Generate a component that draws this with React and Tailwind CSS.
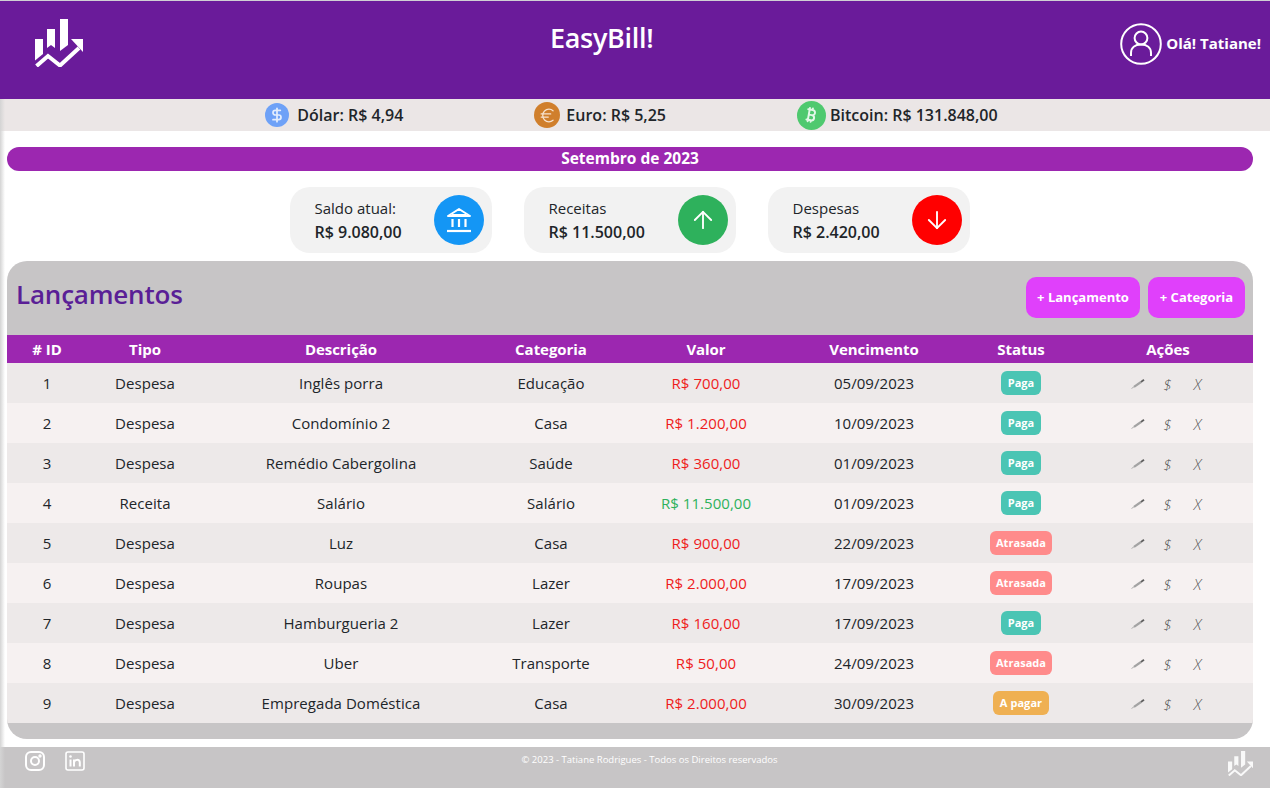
import React from "react";
import { ArrowUp, ArrowDown, DollarSign, Euro, Bitcoin } from "lucide-react";

function Logo({ className }) {
  return (
    <svg viewBox="0 0 48 48" className={className} fill="currentColor">
      <polygon points="0,20 8,20 8,35 0,41.5" />
      <polygon points="12,10 20,10 20,29 16,26 12,29" />
      <polygon points="25,0 33,0 33,26 25,32" />
      <polyline points="1.5,47 13,37 25,46.5 44,29" fill="none" stroke="currentColor" strokeWidth="4" />
      <polygon points="36,20 48,20 48,33" />
    </svg>
  );
}

function UserIcon() {
  return (
    <svg viewBox="0 0 42 42" className="w-[42px] h-[42px]" fill="none" stroke="white" strokeWidth="2">
      <circle cx="21" cy="21" r="19.8" />
      <circle cx="21" cy="15" r="6.4" />
      <path d="M11 33 V30 C11 24.5 15 21.5 21 21.5 C27 21.5 31 24.5 31 30 V33" />
    </svg>
  );
}

function BankIcon() {
  return (
    <svg viewBox="0 0 28 28" className="w-7 h-7" fill="none" stroke="white">
      <path d="M14 3 L25 10 H3 Z" strokeWidth="2" strokeLinejoin="round" />
      <path d="M7 9 H21" strokeWidth="2" />
      <path d="M2 25 H26" strokeWidth="2.2" />
      <path d="M7.5 13 V21 M14 13 V21 M20.5 13 V21" strokeWidth="2.2" />
    </svg>
  );
}

function Pen() {
  return (
    <svg viewBox="0 0 14 10" className="w-3.5 h-2.5" fill="none">
      <path d="M0.5 9.5 L3 7.8" stroke="#b0b0b0" strokeWidth="1" />
      <path d="M3 7.8 L10 3" stroke="#a3a3a3" strokeWidth="2.2" />
      <path d="M10 3 L13 0.8" stroke="#606060" strokeWidth="1.8" />
    </svg>
  );
}

function Instagram() {
  return (
    <svg viewBox="0 0 20 20" className="w-5 h-5" fill="none" stroke="white" strokeWidth="2">
      <rect x="1" y="1" width="18" height="18" rx="5" />
      <circle cx="10" cy="10" r="4" />
      <circle cx="15" cy="5" r="0.7" fill="white" />
    </svg>
  );
}

function Linkedin() {
  return (
    <svg viewBox="0 0 20 20" className="w-5 h-5" fill="none">
      <rect x="1" y="1" width="18" height="18" rx="2" stroke="white" strokeWidth="1.6" />
      <path d="M5.5 8.5 V15.5 M9 15.5 V8.5 M9 11.5 C9.5 8.5 14.8 7.5 14.8 11.5 V15.5" stroke="white" strokeWidth="2" />
      <circle cx="5.5" cy="5.5" r="1.3" fill="white" />
    </svg>
  );
}

const rows = [
  [1, "Despesa", "Inglês porra", "Educação", "R$ 700,00", "05/09/2023", "Paga"],
  [2, "Despesa", "Condomínio 2", "Casa", "R$ 1.200,00", "10/09/2023", "Paga"],
  [3, "Despesa", "Remédio Cabergolina", "Saúde", "R$ 360,00", "01/09/2023", "Paga"],
  [4, "Receita", "Salário", "Salário", "R$ 11.500,00", "01/09/2023", "Paga"],
  [5, "Despesa", "Luz", "Casa", "R$ 900,00", "22/09/2023", "Atrasada"],
  [6, "Despesa", "Roupas", "Lazer", "R$ 2.000,00", "17/09/2023", "Atrasada"],
  [7, "Despesa", "Hamburgueria 2", "Lazer", "R$ 160,00", "17/09/2023", "Paga"],
  [8, "Despesa", "Uber", "Transporte", "R$ 50,00", "24/09/2023", "Atrasada"],
  [9, "Despesa", "Empregada Doméstica", "Casa", "R$ 2.000,00", "30/09/2023", "A pagar"],
];

const badge = {
  Paga: "bg-[#4bc5b4] w-10",
  Atrasada: "bg-[#ff8b8b] w-[62px]",
  "A pagar": "bg-[#efb052] w-14",
};

const heads = ["# ID", "Tipo", "Descrição", "Categoria", "Valor", "Vencimento", "Status", "Ações"];

export default function App() {
  return (
    <div className="relative w-[1270px] h-[788px] overflow-hidden bg-white flex flex-col font-['Open_Sans','Noto_Sans',sans-serif] text-[#212529]">
      <header className="h-[99px] shrink-0 border-t border-[#cfcfd4] bg-[#6a1b9a] flex justify-between items-start pl-[35px] pr-[9px] text-white">
        <Logo className="w-12 h-12 mt-[18px] text-white" />
        <h1 className="text-[27px] font-semibold leading-none mt-[23px] tracking-[-0.3px]">EasyBill!</h1>
        <div className="flex items-center gap-1 mt-[22px]">
          <UserIcon />
          <span className="text-[15px] font-bold mb-[1px]">Olá! Tatiane!</span>
        </div>
      </header>

      <div className="h-8 shrink-0 bg-[#ebe6e6] flex items-center justify-center gap-[131px] pr-[7px] text-[16px] font-semibold text-[#212529]">
        <div className="flex items-center gap-2">
          <span className="w-6 h-6 rounded-full bg-[#6ea1f7] flex items-center justify-center">
            <DollarSign size={16} color="#e3edfd" strokeWidth={2.6} />
          </span>
          Dólar: R$ 4,94
        </div>
        <div className="flex items-center gap-[6px]">
          <span className="w-[26px] h-[26px] rounded-full bg-[#d07f2c] flex items-center justify-center">
            <Euro size={19} color="#f7e3cf" strokeWidth={1.6} />
          </span>
          Euro: R$ 5,25
        </div>
        <div className="flex items-center gap-[4px]">
          <span className="w-[29px] h-[29px] rounded-full bg-[#4fc96f] flex items-center justify-center">
            <Bitcoin size={18} color="#e3f7e8" strokeWidth={2.6} />
          </span>
          Bitcoin: R$ 131.848,00
        </div>
      </div>

      <div className="flex-1 flex flex-col pl-[7px] pr-[17px] pt-4">
        <div className="h-6 shrink-0 rounded-xl bg-[#9c27b0] flex items-center justify-center text-white text-[15.5px] font-bold">
          Setembro de 2023
        </div>

        <div className="flex justify-center gap-8 mt-4 shrink-0">
          <Card w="w-[202px]" title="Saldo atual:" value="R$ 9.080,00" color="bg-[#1496f5]" icon={<BankIcon />} />
          <Card w="w-[212px]" title="Receitas" value="R$ 11.500,00" color="bg-[#2eb15c]" icon={<ArrowUp size={28} color="white" strokeWidth={1.6} />} />
          <Card w="w-[202px]" title="Despesas" value="R$ 2.420,00" color="bg-[#ff0000]" icon={<ArrowDown size={28} color="white" strokeWidth={1.6} />} />
        </div>

        <section className="mt-2 h-[478px] shrink-0 rounded-[20px] bg-[#c7c5c6] overflow-hidden">
          <div className="h-[74px] flex items-center justify-between pl-[9px] pr-2">
            <h2 className="text-[26px] font-semibold text-[#5a1f96] tracking-[-0.2px] mb-[7px]">Lançamentos</h2>
            <div className="flex gap-2 mb-[1px]">
              <button className="w-[114px] h-[41px] rounded-[10px] bg-[#e040fb] text-white text-[13px] font-bold">+ Lançamento</button>
              <button className="w-[97px] h-[41px] rounded-[10px] bg-[#e040fb] text-white text-[13px] font-bold">+ Categoria</button>
            </div>
          </div>
          <table className="w-full table-fixed border-collapse text-[15px] tracking-[0.05px]">
            <colgroup>
              <col className="w-[80px]" />
              <col className="w-[116px]" />
              <col className="w-[276px]" />
              <col className="w-[144px]" />
              <col className="w-[166px]" />
              <col className="w-[170px]" />
              <col className="w-[124px]" />
              <col className="w-[170px]" />
            </colgroup>
            <thead>
              <tr className="h-7 bg-[#9c27b0] text-white">
                {heads.map((h) => (
                  <th key={h} className="font-bold text-[15px] tracking-[-0.05px] p-0">{h}</th>
                ))}
              </tr>
            </thead>
            <tbody>
              {rows.map((r, i) => (
                <tr key={r[0]} className={"h-10 " + (i % 2 === 0 ? "bg-[#ede9e9]" : "bg-[#f6f1f1]")}>
                  <td className="text-center p-0 pt-[1px]">{r[0]}</td>
                  <td className="text-center p-0 pt-[1px]">{r[1]}</td>
                  <td className="text-center p-0 pt-[1px]">{r[2]}</td>
                  <td className="text-center p-0 pt-[1px]">{r[3]}</td>
                  <td className={"text-center p-0 pt-[1px] " + (r[1] === "Receita" ? "text-[#2eb15c]" : "text-[#ef1c1c]")}>{r[4]}</td>
                  <td className="text-center p-0 pt-[1px]">{r[5]}</td>
                  <td className="p-0">
                    <span className={"mx-auto flex items-center justify-center h-6 rounded-[6px] text-white text-[11px] font-bold " + badge[r[6]]}>{r[6]}</span>
                  </td>
                  <td className="p-0 pt-[2px]">
                    <div className="flex items-center justify-center gap-[14px] pr-[1px] text-[15px] italic font-light text-[#555]">
                      <span className="w-4 flex justify-center"><Pen /></span>
                      <span className="w-4 text-center">$</span>
                      <span className="w-4 text-center">X</span>
                    </div>
                  </td>
                </tr>
              ))}
            </tbody>
          </table>
        </section>
      </div>

      <footer className="relative h-[41px] shrink-0 bg-[#c7c5c6] flex justify-between items-start pl-[25px] pr-[17px] pt-[4px] text-white">
        <div className="flex gap-5">
          <Instagram />
          <Linkedin />
        </div>
        <span className="text-[9.5px] leading-none mt-[4px] ml-[-14px]">© 2023 - Tatiane Rodrigues - Todos os Direitos reservados</span>
        <Logo className="w-[25px] h-[25px] text-white opacity-90" />
      </footer>

      <div className="absolute left-0 top-[99px] bottom-0 w-[5px] bg-gradient-to-r from-[#d4d4d4] to-transparent pointer-events-none" />
    </div>
  );
}

function Card({ w, title, value, color, icon }) {
  return (
    <div className={"h-[66px] rounded-[20px] bg-[#f2f2f2] flex items-center justify-between pl-[24.5px] pr-2 " + w}>
      <div className="text-[#212529]">
        <div className="text-[15px] leading-[20px] font-normal">{title}</div>
        <div className="text-[16px] leading-[20px] mt-[4px] font-semibold">{value}</div>
      </div>
      <div className={"w-[50px] h-[50px] rounded-full flex items-center justify-center " + color}>{icon}</div>
    </div>
  );
}
